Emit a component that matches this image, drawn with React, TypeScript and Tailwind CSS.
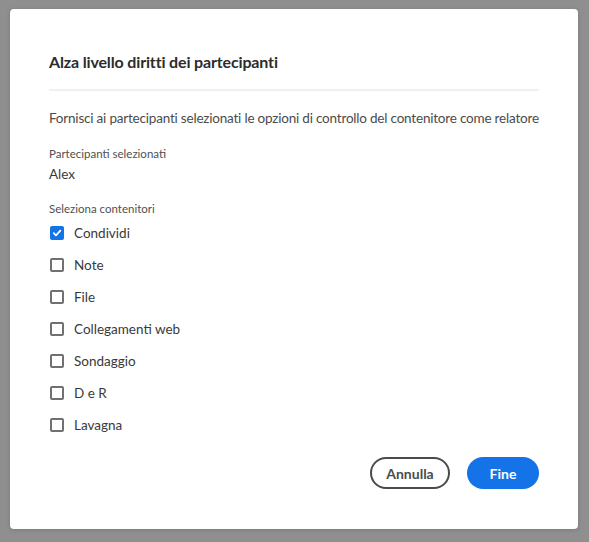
const items = [
  { label: 'Condividi', checked: true },
  { label: 'Note', checked: false },
  { label: 'File', checked: false },
  { label: 'Collegamenti web', checked: false },
  { label: 'Sondaggio', checked: false },
  { label: 'D e R', checked: false },
  { label: 'Lavagna', checked: false },
];

function Box({ checked }: { checked: boolean }) {
  if (checked) {
    return (
      <span className="flex h-[14px] w-[14px] items-center justify-center rounded-[2px] bg-[#1473e6]">
        <svg width="10" height="10" viewBox="0 0 10 10" fill="none">
          <path d="M1.8 5.2 L4 7.4 L8.3 2.6" stroke="white" strokeWidth="1.8" strokeLinecap="round" strokeLinejoin="round" />
        </svg>
      </span>
    );
  }
  return <span className="block h-[14px] w-[14px] rounded-[2px] border-2 border-[#707070] bg-white" />;
}

export default function App() {
  return (
    <div className="flex h-[542px] w-[589px] bg-[#8f8f8f] pl-[10px] pt-[9px] font-['Lato',sans-serif]">
      <div className="flex h-[520px] w-[568px] flex-col rounded-[4px] bg-white px-[39px] pt-[43px] shadow-[0_1px_4px_rgba(0,0,0,0.15)]">
        <h1 className="text-[16px] font-bold leading-[20px] tracking-[-0.15px] text-[#2c2c2c]">Alza livello diritti dei partecipanti</h1>
        <div className="mt-[17px] h-[2px] w-full bg-[#f0f0f0]" />
        <p className="mt-[17px] whitespace-nowrap text-[13.5px] leading-[20px] tracking-[-0.2px] text-[#4b4b4b]">
          Fornisci ai partecipanti selezionati le opzioni di controllo del contenitore come relatore
        </p>
        <div className="mt-[18px] text-[11.5px] leading-[16px] text-[#505050]">Partecipanti selezionati</div>
        <div className="mt-[2px] text-[13.5px] leading-[20px] text-[#3a3a3a]">Alex</div>
        <div className="mt-[17px] text-[11.5px] leading-[16px] text-[#505050]">Seleziona contenitori</div>
        <div className="flex flex-col">
          {items.map((it) => (
            <label key={it.label} className="flex h-[32px] items-center gap-[10px] pl-[1px]">
              <Box checked={it.checked} />
              <span className="text-[13.5px] text-[#3a3a3a]">{it.label}</span>
            </label>
          ))}
        </div>
        <div className="mt-[16px] flex justify-end gap-[17px]">
          <button className="h-[32px] w-[80px] rounded-full border-2 border-[#4b4b4b] text-[14px] font-bold text-[#4b4b4b]">
            Annulla
          </button>
          <button className="h-[32px] w-[72px] rounded-full bg-[#1473e6] text-[14px] font-bold text-white">
            Fine
          </button>
        </div>
      </div>
    </div>
  );
}
